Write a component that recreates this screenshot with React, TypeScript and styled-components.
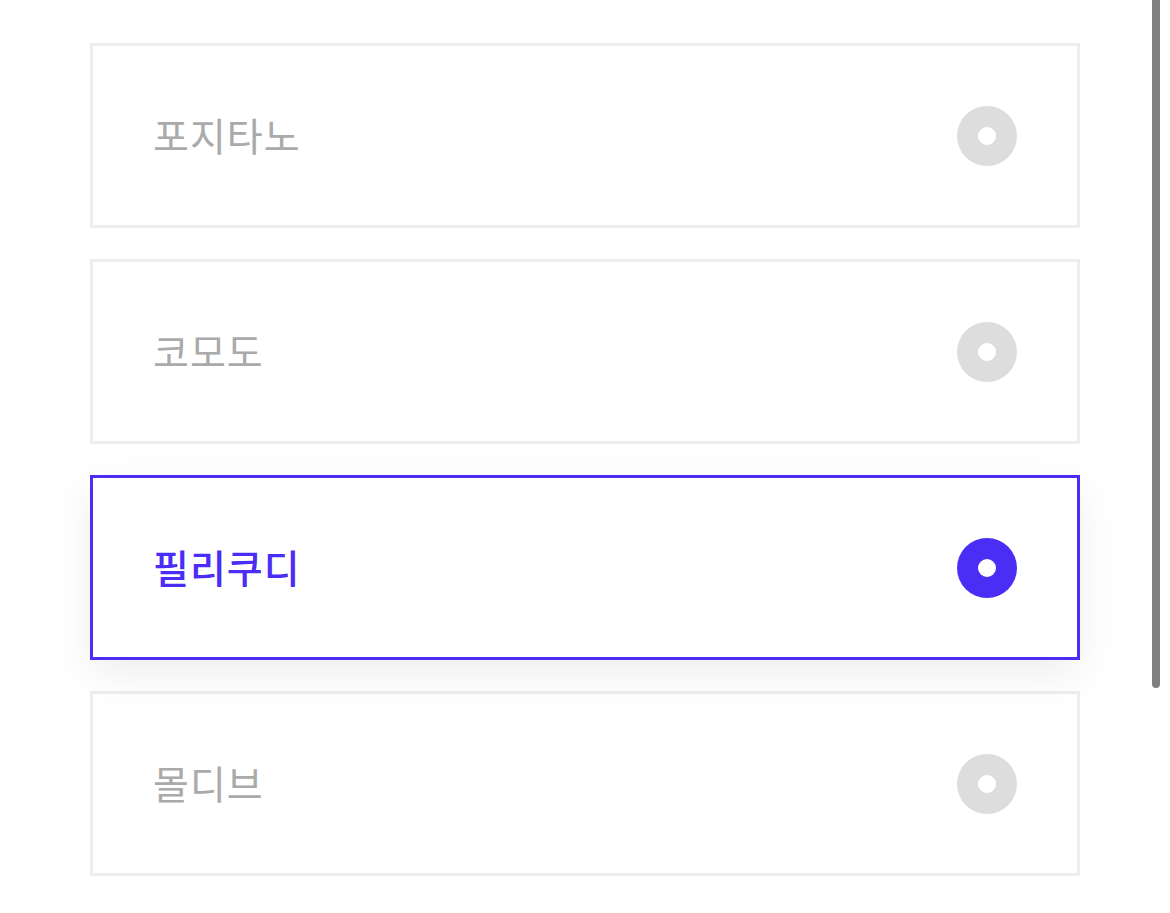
import React from "react";
import styled, { createGlobalStyle } from "styled-components";

const GlobalStyle = createGlobalStyle`
  html, body {
    margin: 0;
    padding: 0;
    background: #ffffff;
    overflow: hidden;
  }
  body {
    font-family: "Noto Sans CJK KR", "Noto Sans", sans-serif;
  }
`;

const ACCENT = "#4b2ef5";

const Page = styled.div`
  position: relative;
  width: 1170px;
  height: 913px;
  overflow: hidden;
  box-sizing: border-box;
  padding: 43px 0 0 90px;
`;

const List = styled.ul`
  list-style: none;
  margin: 0;
  padding: 0;
  width: 990px;
  display: flex;
  flex-direction: column;
  gap: 31px;
`;

const Card = styled.li<{ $selected: boolean }>`
  box-sizing: border-box;
  height: 185px;
  display: flex;
  align-items: center;
  justify-content: space-between;
  padding: 0 60px 0 60px;
  background: #ffffff;
  border: ${(p) => (p.$selected ? `3px solid ${ACCENT}` : "3px solid #eeeeee")};
  box-shadow: ${(p) => (p.$selected ? "0 14px 40px rgba(0, 0, 0, 0.07)" : "none")};
  position: relative;
  z-index: ${(p) => (p.$selected ? 1 : 0)};
`;

const Label = styled.span<{ $selected: boolean }>`
  font-size: 39px;
  line-height: 1;
  letter-spacing: 1px;
  margin-top: -3px;
  font-weight: ${(p) => (p.$selected ? 500 : 400)};
  color: ${(p) => (p.$selected ? ACCENT : "#aaaaaa")};
`;

const Radio = styled.span<{ $selected: boolean }>`
  box-sizing: border-box;
  width: 60px;
  height: 60px;
  border-radius: 50%;
  background: ${(p) => (p.$selected ? ACCENT : "#dddddd")};
  display: flex;
  align-items: center;
  justify-content: center;
  &::after {
    content: "";
    width: 18px;
    height: 18px;
    border-radius: 50%;
    background: #ffffff;
  }
`;

const ScrollThumb = styled.div`
  position: absolute;
  top: 0;
  right: 10px;
  width: 8px;
  height: 688px;
  background: #808080;
  border-radius: 0 0 4px 4px;
`;

const items = ["포지타노", "코모도", "필리쿠디", "몰디브"];

export default function App() {
  const selected = 2;
  return (
    <>
      <GlobalStyle />
      <Page>
        <List>
          {items.map((name, i) => (
            <Card key={name} $selected={i === selected}>
              <Label $selected={i === selected}>{name}</Label>
              <Radio $selected={i === selected} />
            </Card>
          ))}
        </List>
        <ScrollThumb />
      </Page>
    </>
  );
}
